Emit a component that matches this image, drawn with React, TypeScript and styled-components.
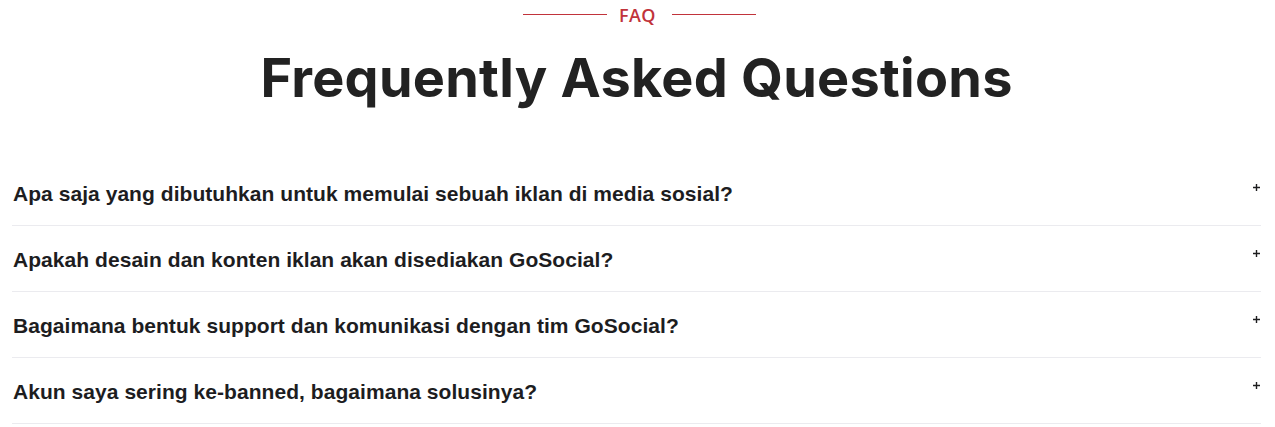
import React from "react";
import styled, { createGlobalStyle } from "styled-components";

const Global = createGlobalStyle`
  html, body { margin: 0; padding: 0; background: #ffffff; }
  * { box-sizing: border-box; }
`;

const Page = styled.section`
  width: 1275px;
  padding: 0 14px 0 12px;
  font-family: "Liberation Sans", Arial, sans-serif;
`;

const Header = styled.header`
  display: flex;
  flex-direction: column;
  align-items: center;
`;

const Eyebrow = styled.div`
  display: flex;
  align-items: center;
  gap: 12px;
  height: 29px;
  margin-left: 6px;
  color: #c1333b;
  font-family: "Open Sans", sans-serif;
  font-weight: 600;
  font-size: 18px;
  letter-spacing: 0.4px;
`;

const Label = styled.span`
  margin-right: 4px;
`;

const Rule = styled.span`
  display: block;
  width: 84px;
  height: 1px;
  background: #c1333b;
`;

const Title = styled.h2`
  margin: 13px 0 0;
  font-family: Inter, sans-serif;
  font-weight: 700;
  font-size: 54px;
  line-height: 72px;
  color: #222222;
  letter-spacing: 0.25px;
`;

const List = styled.div`
  margin-top: 46px;
  display: flex;
  flex-direction: column;
`;

const Row = styled.div`
  display: flex;
  justify-content: space-between;
  align-items: flex-start;
  padding: 23px 0 20px 1px;
  border-bottom: 1px solid #ebebef;
`;

const Question = styled.h3`
  margin: 0;
  font-family: "Liberation Sans", Arial, sans-serif;
  font-weight: 700;
  font-size: 21px;
  line-height: 22px;
  letter-spacing: 0.05px;
  color: #1d1d1f;
`;

const Plus = styled.span`
  width: 12px;
  display: flex;
  justify-content: center;
  margin-top: 1px;
  margin-right: -1px;
`;

const questions = [
  "Apa saja yang dibutuhkan untuk memulai sebuah iklan di media sosial?",
  "Apakah desain dan konten iklan akan disediakan GoSocial?",
  "Bagaimana bentuk support dan komunikasi dengan tim GoSocial?",
  "Akun saya sering ke-banned, bagaimana solusinya?",
];

export default function App() {
  return (
    <>
      <Global />
      <Page>
        <Header>
          <Eyebrow>
            <Rule />
            <Label>FAQ</Label>
            <Rule />
          </Eyebrow>
          <Title>Frequently Asked Questions</Title>
        </Header>
        <List>
          {questions.map((q) => (
            <Row key={q}>
              <Question>{q}</Question>
              <Plus>
                <svg width="7" height="7" viewBox="0 0 7 7">
                  <path d="M3.5 0v7M0 3.5h7" stroke="#1d1d1f" strokeWidth="1.4" />
                </svg>
              </Plus>
            </Row>
          ))}
        </List>
      </Page>
    </>
  );
}
